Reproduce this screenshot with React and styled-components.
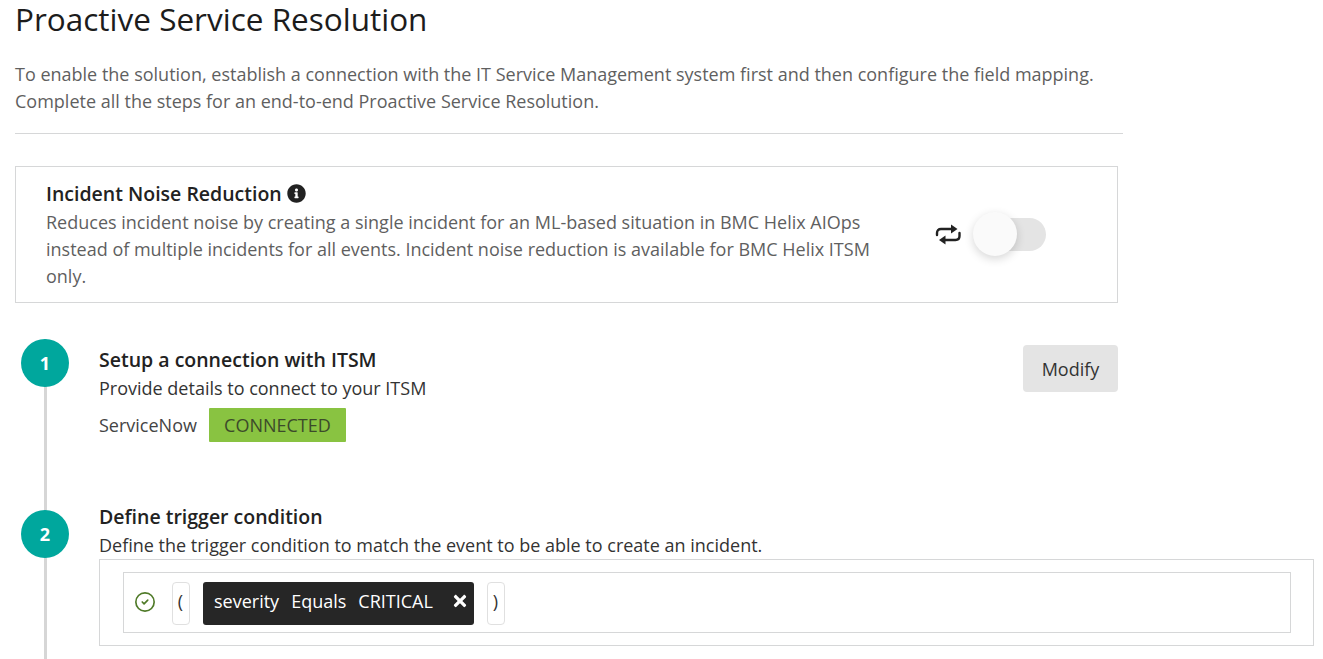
import React from "react";
import styled, { createGlobalStyle } from "styled-components";
import { FaInfoCircle, FaTimes } from "react-icons/fa";
import { CircleCheck } from "lucide-react";

const GlobalStyle = createGlobalStyle`
  html, body {
    margin: 0;
    padding: 0;
    height: 100%;
    overflow: hidden;
    background: #fff;
  }
  body {
    font-family: "Open Sans", "Liberation Sans", sans-serif;
    color: #222;
  }
  * {
    box-sizing: border-box;
  }
`;

function SwapIcon() {
  return (
    <svg width="28" height="22" viewBox="0 0 28 22" fill="none">
      <path
        d="M3 11V9C3 6.500 4.500 5 7 5H18"
        stroke="#222"
        strokeWidth="2.400"
        strokeLinecap="round"
      />
      <path d="M17 0.500L23.500 5L17 9.500Z" fill="#222" />
      <path
        d="M25.500 9V12C25.500 14.500 24 16 21.500 16H10"
        stroke="#222"
        strokeWidth="2.400"
        strokeLinecap="round"
      />
      <path d="M11.500 11.500L5 16L11.500 20.500Z" fill="#222" />
    </svg>
  );
}

function App() {
  return (
    <Page>
      <GlobalStyle />
      <Title>Proactive Service Resolution</Title>
      <Intro>
        To enable the solution, establish a connection with the IT Service
        Management system first and then configure the field mapping.
        <br />
        Complete all the steps for an end-to-end Proactive Service Resolution.
      </Intro>
      <Divider />

      <NoiseCard>
        <NoiseText>
          <NoiseHeading>
            Incident Noise Reduction <FaInfoCircle size={19} />
          </NoiseHeading>
          <NoiseBody>
            Reduces incident noise by creating a single incident for an
            ML-based situation in BMC Helix AIOps instead of multiple incidents
            for all events. Incident noise reduction is available for BMC Helix
            ITSM only.
          </NoiseBody>
        </NoiseText>
        <SwapIcon />
        <Toggle>
          <Knob />
        </Toggle>
      </NoiseCard>

      <Steps>
        <Step $height={171}>
          <Rail>
            <Circle>1</Circle>
          </Rail>
          <StepContent $top={6}>
            <StepHead>
              <StepInfo>
                <StepTitle>Setup a connection with ITSM</StepTitle>
                <StepText>Provide details to connect to your ITSM</StepText>
                <ConnectionRow>
                  <span>ServiceNow</span>
                  <Badge>CONNECTED</Badge>
                </ConnectionRow>
              </StepInfo>
              <ModifyButton>Modify</ModifyButton>
            </StepHead>
          </StepContent>
        </Step>

        <Step $height={149}>
          <Rail>
            <Circle>2</Circle>
          </Rail>
          <StepContent $top={-6}>
            <StepTitle>Define trigger condition</StepTitle>
            <StepText>
              Define the trigger condition to match the event to be able to
              create an incident.
            </StepText>
            <TriggerBox>
              <ExpressionRow>
                <StatusIcon>
                  <CircleCheck size={22} strokeWidth={1.8} />
                </StatusIcon>
                <Paren>(</Paren>
                <Chip>
                  <span>severity</span>
                  <span>Equals</span>
                  <span>CRITICAL</span>
                  <ChipClose>
                    <FaTimes size={18} />
                  </ChipClose>
                </Chip>
                <Paren>)</Paren>
              </ExpressionRow>
            </TriggerBox>
          </StepContent>
        </Step>
      </Steps>
    </Page>
  );
}

export default App;

const Page = styled.div`
  width: 1323px;
  height: 659px;
  overflow: hidden;
  padding-left: 15px;
`;

const Title = styled.h1`
  margin: 0;
  font-size: 31.500px;
  line-height: 37px;
  font-weight: 400;
  color: #1c1c1c;
`;

const Intro = styled.p`
  margin: 24px 0 0;
  width: 1108px;
  font-size: 18px;
  line-height: 27px;
  color: #5f5f5f;
`;

const Divider = styled.hr`
  margin: 18px 0 32px;
  width: 1108px;
  height: 1px;
  border: 0;
  background: #d6d7d8;
`;

const NoiseCard = styled.section`
  display: flex;
  align-items: center;
  width: 1103px;
  height: 137px;
  padding: 0 0 0 30px;
  border: 1px solid #d6d7d8;
`;

const NoiseText = styled.div`
  width: 888px;
`;

const NoiseHeading = styled.h3`
  display: flex;
  align-items: center;
  gap: 5px;
  margin: 0;
  font-size: 19.500px;
  line-height: 27px;
  font-weight: 600;
  color: #222;
`;

const NoiseBody = styled.p`
  margin: 2px 0 0;
  width: 840px;
  font-size: 18px;
  line-height: 27px;
  color: #5f5f5f;
`;

const Toggle = styled.div`
  position: relative;
  width: 65px;
  height: 33px;
  margin-left: 19px;
  border-radius: 17px;
  background: #e4e4e4;
`;

const Knob = styled.div`
  position: absolute;
  left: -8px;
  top: -6px;
  width: 44px;
  height: 44px;
  border-radius: 50%;
  background: #fafafa;
  box-shadow: 0 3px 10px rgba(0, 0, 0, 0.16);
`;

const Steps = styled.div`
  margin: 36px 0 0 6px;
`;

const Step = styled.div`
  display: flex;
  gap: 30px;
  height: ${(p) => p.$height}px;
`;

const Rail = styled.div`
  flex: 0 0 48px;
  background: linear-gradient(#d6d6d6, #d6d6d6) 23px 0 / 3px 100% no-repeat;
`;

const Circle = styled.div`
  display: flex;
  align-items: center;
  justify-content: center;
  width: 48px;
  height: 48px;
  border-radius: 50%;
  background: #00a79d;
  color: #fff;
  font-size: 18px;
  font-weight: 700;
`;

const StepContent = styled.div`
  flex: 1;
  margin-top: ${(p) => p.$top}px;
`;

const StepHead = styled.div`
  display: flex;
  justify-content: space-between;
  align-items: flex-start;
  width: 1019px;
`;

const StepInfo = styled.div`
  padding-top: 2px;
`;

const StepTitle = styled.h4`
  margin: -1px 0 0;
  font-size: 19.500px;
  line-height: 27px;
  font-weight: 600;
  color: #222;
`;

const StepText = styled.p`
  margin: 2px 0 0;
  font-size: 18px;
  line-height: 27px;
  color: #333;
`;

const ConnectionRow = styled.div`
  display: flex;
  align-items: center;
  gap: 12px;
  margin-top: 6px;
  font-size: 18px;
  color: #444;
`;

const Badge = styled.span`
  display: inline-flex;
  align-items: center;
  justify-content: center;
  width: 137px;
  height: 34px;
  border-radius: 1px;
  background: #89c341;
  color: #3c4a2a;
`;

const ModifyButton = styled.button`
  width: 95px;
  height: 47px;
  border: 0;
  border-radius: 4px;
  background: #e4e4e4;
  color: #333;
  font-family: inherit;
  font-size: 18px;
`;

const TriggerBox = styled.div`
  width: 1215px;
  height: 87px;
  padding: 12px 22px 12px 23px;
  border: 1px solid #d6d7d8;
`;

const ExpressionRow = styled.div`
  display: flex;
  align-items: center;
  height: 61px;
  padding: 2px 0 0 10px;
  border: 1px solid #d6d7d8;
`;

const StatusIcon = styled.span`
  display: flex;
  width: 38px;
  margin-bottom: 4px;
  color: #4f7a28;
`;

const Paren = styled.span`
  display: flex;
  align-items: center;
  justify-content: center;
  width: 18px;
  height: 43px;
  padding: 0 1px 6px 0;
  border: 1px solid #e0e0e0;
  border-radius: 4px;
  color: #333;
  font-size: 18px;
`;

const Chip = styled.div`
  display: flex;
  align-items: center;
  gap: 12px;
  width: 271px;
  height: 43px;
  margin: 0 13px;
  padding: 0 5px 6px 11px;
  border-radius: 3px;
  background: #262626;
  color: #fff;
  font-size: 18px;
`;

const ChipClose = styled.span`
  display: flex;
  margin-left: auto;
`;
